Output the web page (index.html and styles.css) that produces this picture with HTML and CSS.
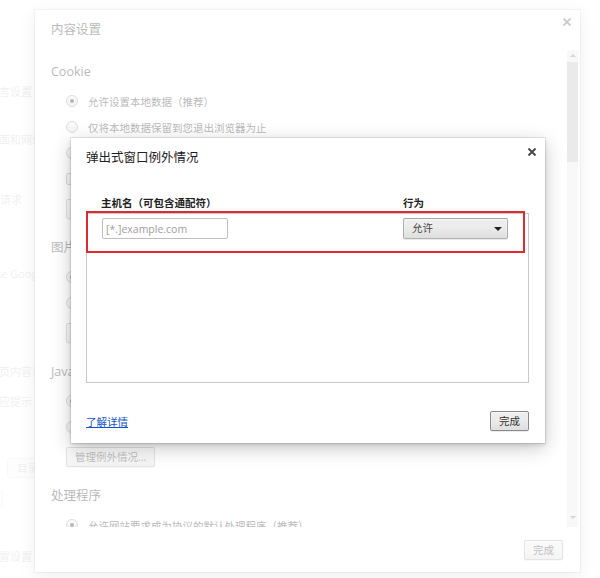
FILE: index.html
```html
<!DOCTYPE html>
<html lang="zh-CN">
<head>
  <meta charset="UTF-8" />
  <meta name="viewport" content="width=device-width, initial-scale=1" />
  <title>弹出式窗口例外情况</title>
  <link rel="stylesheet" href="styles.css">
</head>
<body>
  <!-- Settings page that sits behind both dialogs -->
  <div class="backdrop">
    <div class="bg-line">语言设置</div>
    <div class="bg-line">页面和网络</div>
    <div class="bg-line bg-indent">请求</div>
    <div class="bg-line">Use Google</div>
    <div class="bg-line">网页内容设置</div>
    <div class="bg-line">响应提示</div>
    <div class="bg-box">目录</div>
    <div class="bg-box bg-box-edge"></div>
    <div class="bg-line">重置设置</div>
  </div>
  <div class="veil"></div>

  <!-- Content settings dialog -->
  <div class="settings">
    <div class="settings-head">
      <h2>内容设置</h2>
      <span class="close">
        <svg viewBox="0 0 8 8" width="8" height="8"><path d="M0.5 0.5L7.5 7.5M7.5 0.5L0.5 7.5" stroke="#666" stroke-width="1.8"/></svg>
      </span>
    </div>
    <div class="settings-main">
      <div class="settings-scroll">
        <section class="group">
          <h3>Cookie</h3>
          <div class="radio-row"><span class="radio checked"></span>允许设置本地数据（推荐）</div>
          <div class="radio-row"><span class="radio"></span>仅将本地数据保留到您退出浏览器为止</div>
          <div class="radio-row"><span class="radio"></span>阻止网站设置任何数据</div>
          <div class="radio-row"><span class="check"></span>阻止第三方 Cookie 和网站数据</div>
          <div class="btn-row">
            <button class="btn">管理例外情况...</button>
            <button class="btn">所有 Cookie 和网站数据...</button>
          </div>
        </section>
        <section class="group">
          <h3>图片</h3>
          <div class="radio-row"><span class="radio checked"></span>显示所有图片（推荐）</div>
          <div class="radio-row"><span class="radio"></span>不显示任何图片</div>
          <div class="btn-row"><button class="btn">管理例外情况...</button></div>
        </section>
        <section class="group">
          <h3>JavaScript</h3>
          <div class="radio-row"><span class="radio checked"></span>允许所有网站运行 JavaScript（推荐）</div>
          <div class="radio-row"><span class="radio"></span>不允许任何网站运行 JavaScript</div>
          <div class="btn-row"><button class="btn">管理例外情况...</button></div>
        </section>
        <section class="group">
          <h3>处理程序</h3>
          <div class="radio-row"><span class="radio checked"></span>允许网站要求成为协议的默认处理程序（推荐）</div>
          <div class="radio-row"><span class="radio"></span>不允许任何网站处理协议</div>
        </section>
      </div>
      <div class="scrollbar">
        <span class="sb-arrow sb-up"></span>
        <span class="sb-thumb"></span>
        <span class="sb-arrow sb-down"></span>
      </div>
    </div>
    <div class="settings-foot">
      <button class="btn">完成</button>
    </div>
  </div>
  <div class="veil veil-top"></div>

  <!-- Pop-up exceptions dialog -->
  <div class="popup">
    <h2 class="popup-title">弹出式窗口例外情况</h2>
    <span class="close close-dark">
      <svg viewBox="0 0 8 8" width="8" height="8"><path d="M0.5 0.5L7.5 7.5M7.5 0.5L0.5 7.5" stroke="#4a4a4a" stroke-width="2"/></svg>
    </span>
    <div class="col-heads">
      <span>主机名（可包含通配符）</span>
      <span>行为</span>
    </div>
    <div class="exceptions">
      <div class="exception-row">
        <input class="host-input" type="text" placeholder="[*.]example.com">
        <div class="select">允许</div>
      </div>
    </div>
    <div class="popup-foot">
      <a href="#" class="link">了解详情</a>
      <button class="btn btn-focus">完成</button>
    </div>
  </div>

  <!-- Red highlight drawn over the first row -->
  <div class="annotation"></div>
</body>
</html>
```

FILE: styles.css
```css
* {
  box-sizing: border-box;
}
html, body {
  margin: 0;
  height: 100%;
}
body {
  position: relative;
  overflow: hidden;
  background: #fff;
  font-family: "Open Sans", "Noto Sans CJK SC", sans-serif;
  font-size: 10.5px;
  color: #333;
}

/* Page behind the dialogs */
.backdrop {
  display: flex;
  flex-direction: column;
  align-items: flex-start;
  padding-top: 84px;
  margin-left: -12px;
  color: #666;
}
.bg-line {
  font-size: 11px;
  line-height: 16px;
  white-space: nowrap;
}
.bg-indent {
  margin-left: 12px;
}
.backdrop > :nth-child(2) { margin-top: 32px; }
.backdrop > :nth-child(3) { margin-top: 44px; }
.backdrop > :nth-child(4) { margin-top: 58px; }
.backdrop > :nth-child(5) { margin-top: 82px; }
.backdrop > :nth-child(6) { margin-top: 14px; }
.backdrop > :nth-child(7) { margin-top: 48px; }
.backdrop > :nth-child(8) { margin-top: 12px; }
.backdrop > :nth-child(9) { margin-top: 41px; }
.bg-box {
  margin-left: 19px;
  width: 60px;
  height: 20px;
  padding-left: 9px;
  line-height: 18px;
  border: 1px solid #bbb;
  border-radius: 2px;
  background: #eee;
}
.bg-box-edge {
  margin-left: 2px;
  width: 13px;
  height: 18px;
}

.veil {
  position: absolute;
  inset: 0;
  background: rgba(255, 255, 255, 0.7);
}
.veil-top {
  background: rgba(255, 255, 255, 0.65);
}

/* Buttons shared by both dialogs */
.btn {
  height: 20px;
  padding: 0 8px;
  font-family: inherit;
  font-size: 10.5px;
  line-height: 18px;
  color: #444;
  background: linear-gradient(#ededed, #ededed 38%, #dedede);
  border: 1px solid rgba(0, 0, 0, 0.25);
  border-radius: 2px;
  box-shadow: 0 1px 0 rgba(0, 0, 0, 0.08), inset 0 1px 2px rgba(255, 255, 255, 0.75);
  white-space: nowrap;
}
.btn-focus {
  border-color: #8a8a8a;
  color: #333;
}

.close {
  position: absolute;
  top: 8px;
  right: 9px;
  width: 8px;
  height: 8px;
  line-height: 0;
}

/* Content settings dialog */
.settings {
  position: absolute;
  left: 35px;
  top: 10px;
  width: 545px;
  height: 562px;
  display: flex;
  flex-direction: column;
  background: #fff;
  box-shadow: 0 4px 16px rgba(0, 0, 0, 0.2), 0 0 0 1px rgba(0, 0, 0, 0.1);
}
.settings-head {
  height: 40px;
  flex: none;
}
.settings-head h2 {
  margin: 0;
  padding-left: 16px;
  font-size: 12.5px;
  font-weight: normal;
  line-height: 40px;
}
.settings-main {
  display: flex;
  height: 477px;
  flex: none;
}
.settings-scroll {
  flex: 1;
  overflow: hidden;
  padding: 14px 0 0 16px;
}
.group {
  margin-bottom: 21px;
}
.group h3 {
  margin: 0 0 8px;
  font-size: 12.5px;
  font-weight: normal;
  line-height: 16px;
}
.radio-row {
  display: flex;
  align-items: center;
  height: 26px;
  padding-left: 15px;
  white-space: nowrap;
}
.radio,
.check {
  position: relative;
  flex: none;
  width: 12px;
  height: 12px;
  margin-right: 10px;
  border: 1px solid #999;
  border-radius: 50%;
  background: linear-gradient(#f4f4f4, #dedede);
}
.check {
  border-radius: 2px;
}
.radio.checked::after {
  content: "";
  position: absolute;
  left: 3px;
  top: 3px;
  width: 4px;
  height: 4px;
  border-radius: 50%;
  background: #333;
}
.btn-row {
  display: flex;
  gap: 8px;
  margin-top: 7px;
  padding-left: 15px;
}
.scrollbar {
  display: flex;
  flex-direction: column;
  align-items: center;
  width: 11px;
  margin-right: 2px;
  padding: 4px 0 8px;
  background: #ececec;
}
.sb-arrow {
  width: 0;
  height: 0;
  border-left: 3px solid transparent;
  border-right: 3px solid transparent;
}
.sb-up {
  border-bottom: 3px solid #888;
}
.sb-down {
  margin-top: auto;
  border-top: 3px solid #888;
}
.sb-thumb {
  width: 11px;
  height: 100px;
  margin-top: 5px;
  background: #c4c4c4;
}
.settings-foot {
  flex: 1;
  display: flex;
  justify-content: flex-end;
  align-items: center;
  padding-right: 17px;
}

/* Pop-up exceptions dialog */
.popup {
  position: absolute;
  left: 71px;
  top: 138px;
  width: 474px;
  height: 305px;
  display: flex;
  flex-direction: column;
  padding: 0 16px 12px 15px;
  background: #fff;
  box-shadow: 0 5px 18px rgba(0, 0, 0, 0.22), 0 2px 4px rgba(0, 0, 0, 0.12), 0 0 0 1px rgba(0, 0, 0, 0.08);
}
.popup-title {
  margin: 0;
  height: 40px;
  font-size: 12.5px;
  font-weight: normal;
  line-height: 40px;
  color: #222;
}
.close-dark {
  top: 10px;
}
.col-heads {
  display: grid;
  grid-template-columns: 302px 1fr;
  margin-top: 17px;
  padding-left: 15px;
  font-weight: bold;
  line-height: 16px;
  color: #222;
}
.exceptions {
  height: 170px;
  margin-top: 2px;
  border: 1px solid #c8c8c8;
}
.exception-row {
  display: grid;
  grid-template-columns: 301px 105px;
  align-items: center;
  padding: 4px 0 0 15px;
}
.host-input {
  width: 126px;
  height: 21px;
  padding: 0 3px;
  font-family: inherit;
  font-size: 10.5px;
  color: #333;
  border: 1px solid #bfbfbf;
  border-radius: 2px;
  outline: none;
}
.host-input::placeholder {
  color: #a0a0a0;
}
.select {
  position: relative;
  height: 21px;
  padding-left: 8px;
  line-height: 19px;
  color: #444;
  background: linear-gradient(#ededed, #ededed 38%, #dedede);
  border: 1px solid rgba(0, 0, 0, 0.25);
  border-radius: 2px;
  box-shadow: 0 1px 0 rgba(0, 0, 0, 0.08), inset 0 1px 2px rgba(255, 255, 255, 0.75);
}
.select::after {
  content: "";
  position: absolute;
  right: 5px;
  top: 8px;
  border-left: 4px solid transparent;
  border-right: 4px solid transparent;
  border-top: 4px solid #222;
}
.popup-foot {
  display: flex;
  justify-content: space-between;
  align-items: center;
  height: 20px;
  margin-top: 28px;
}
.link {
  color: #15c;
  text-decoration: underline;
}

/* Red highlight box */
.annotation {
  position: absolute;
  left: 86px;
  top: 211px;
  width: 439px;
  height: 42px;
  border: 2px solid #de2a2e;
}
```
